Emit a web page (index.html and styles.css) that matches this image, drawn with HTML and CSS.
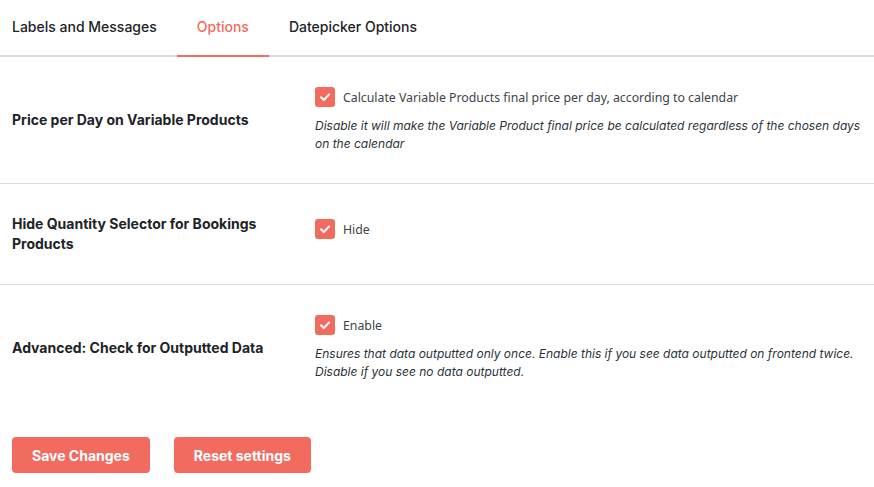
FILE: index.html
```html
<!DOCTYPE html>
<html>
<head>
<meta charset="utf-8">
<link rel="stylesheet" href="styles.css">
</head>
<body>
<div class="page">
  <nav class="tabs">
    <a class="tab tab-first">Labels and Messages</a>
    <a class="tab active">Options</a>
    <a class="tab">Datepicker Options</a>
  </nav>
  <div class="rows">
    <div class="row">
      <div class="row-label">Price per Day on Variable Products</div>
      <div class="row-field">
        <label class="check"><span class="box"><svg viewBox="0 0 20 20" width="20" height="20"><path d="M6 10.2l2.8 2.8L14.2 7.4" fill="none" stroke="#fff" stroke-width="2" stroke-linecap="round" stroke-linejoin="round"/></svg></span><span class="check-text">Calculate Variable Products final price per day, according to calendar</span></label>
        <p class="desc">Disable it will make the Variable Product final price be calculated regardless of the chosen days on the calendar</p>
      </div>
    </div>
    <div class="row">
      <div class="row-label">Hide Quantity Selector for Bookings Products</div>
      <div class="row-field">
        <label class="check"><span class="box"><svg viewBox="0 0 20 20" width="20" height="20"><path d="M6 10.2l2.8 2.8L14.2 7.4" fill="none" stroke="#fff" stroke-width="2" stroke-linecap="round" stroke-linejoin="round"/></svg></span><span class="check-text">Hide</span></label>
      </div>
    </div>
    <div class="row row-last">
      <div class="row-label">Advanced: Check for Outputted Data</div>
      <div class="row-field">
        <label class="check"><span class="box"><svg viewBox="0 0 20 20" width="20" height="20"><path d="M6 10.2l2.8 2.8L14.2 7.4" fill="none" stroke="#fff" stroke-width="2" stroke-linecap="round" stroke-linejoin="round"/></svg></span><span class="check-text">Enable</span></label>
        <p class="desc">Ensures that data outputted only once. Enable this if you see data outputted on frontend twice. Disable if you see no data outputted.</p>
      </div>
    </div>
  </div>
  <div class="actions">
    <button class="btn">Save Changes</button>
    <button class="btn">Reset settings</button>
  </div>
</div>
</body>
</html>
```
FILE: styles.css
```css
* { box-sizing: border-box; }
html, body { margin: 0; padding: 0; background: #fff; }
body {
  font-family: Inter, "Liberation Sans", sans-serif;
  color: #1d2327;
  font-size: 14px;
}
.page { width: 874px; }
.tabs {
  display: flex;
  height: 57px;
  border-bottom: 2px solid #dcdcdc;
}
.tab {
  display: flex;
  align-items: center;
  padding: 0 20px 2px;
  font-size: 14px;
  font-weight: 500;
  color: #1d2327;
  margin-bottom: -2px;
  border-bottom: 2px solid transparent;
}
.tab-first { padding-left: 12px; }
.tab.active {
  color: #f26b5f;
  border-bottom-color: #f26b5f;
}
.row {
  display: flex;
  align-items: center;
  padding: 30px 0;
  border-bottom: 1px solid #dcdcdc;
}
.row-last { border-bottom: none; }
.row-label {
  width: 315px;
  padding: 0 40px 0 12px;
  font-weight: 700;
  font-size: 14px;
  line-height: 20px;
}
.row-field { flex: 1; padding-right: 12px; }
.check {
  display: flex;
  align-items: center;
  gap: 8px;
  height: 20px;
  margin-bottom: 10px;
}
.box {
  width: 20px;
  height: 20px;
  border-radius: 3px;
  background: #f26b5f;
  display: flex;
}
.check-text {
  font-family: "Noto Sans", "Open Sans", sans-serif;
  font-size: 12.3px;
  color: #3c434a;
}
.desc {
  margin: 0;
  font-style: italic;
  font-size: 12px;
  line-height: 18px;
  color: #2c3338;
}
.actions {
  display: flex;
  gap: 24px;
  padding: 26px 12px;
}
.btn {
  height: 36px;
  padding: 0 20px;
  border: none;
  border-radius: 4px;
  background: #f26b5f;
  color: #fff;
  font-family: Inter, "Liberation Sans", sans-serif;
  font-weight: 700;
  font-size: 14px;
}
```
